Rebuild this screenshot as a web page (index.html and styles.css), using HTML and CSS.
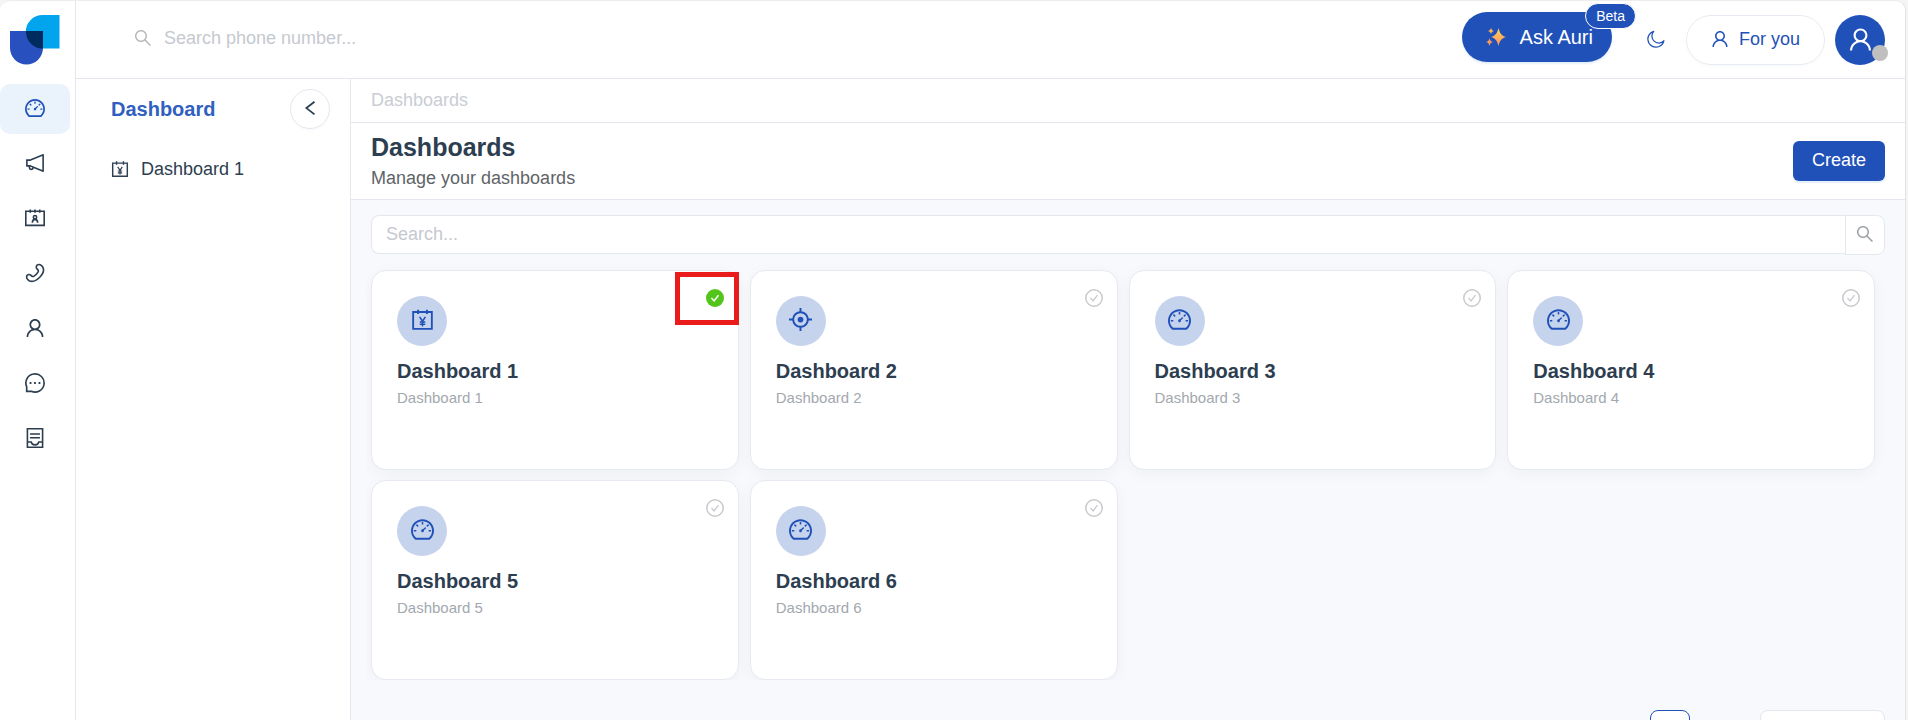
FILE: index.html
```html
<!DOCTYPE html>
<html lang="en">
<head>
  <meta charset="UTF-8" />
  <meta name="viewport" content="width=device-width, initial-scale=1.0" />
  <title>Dashboards</title>
  <link rel="stylesheet" href="styles.css">
</head>
<body>
  <!-- icon sprite -->
  <svg class="sprite" aria-hidden="true">
    <symbol id="i-gauge" viewBox="64 64 896 896"><path fill="currentColor" d="M924.8 385.6a446.7 446.7 0 00-96-142.4 446.7 446.7 0 00-142.4-96C631.1 123.8 572.5 112 512 112s-119.1 11.8-174.4 35.2a446.7 446.7 0 00-142.4 96 446.7 446.7 0 00-96 142.4C75.8 440.9 64 499.5 64 560c0 132.7 58.3 257.7 159.9 343.1l1.7 1.4c5.8 4.8 13.1 7.5 20.6 7.5h531.7c7.5 0 14.8-2.7 20.6-7.5l1.7-1.4C901.7 817.7 960 692.7 960 560c0-60.5-11.9-119.1-35.2-174.4zM761.4 836H262.6A371.12 371.12 0 01140 560c0-99.4 38.7-192.8 109-263 70.3-70.3 163.7-109 263-109 99.4 0 192.8 38.7 263 109 70.3 70.3 109 163.7 109 263 0 105.6-44.5 205.5-122.6 276zM623.5 421.5a8.03 8.03 0 00-11.3 0L527.7 506c-18.7-5-39.4-.2-54.1 14.5a55.95 55.95 0 000 79.2 55.95 55.95 0 0079.2 0 55.87 55.87 0 0014.5-54.1l84.5-84.5c3.1-3.1 3.1-8.2 0-11.3l-28.3-28.3zM490 320h44c4.4 0 8-3.6 8-8v-80c0-4.4-3.6-8-8-8h-44c-4.4 0-8 3.6-8 8v80c0 4.4 3.6 8 8 8zm260 218v44c0 4.4 3.6 8 8 8h80c4.4 0 8-3.6 8-8v-44c0-4.4-3.6-8-8-8h-80c-4.4 0-8 3.6-8 8zm12.7-197.2l-31.1-31.1a8.03 8.03 0 00-11.3 0l-56.6 56.6a8.03 8.03 0 000 11.3l31.1 31.1c3.1 3.1 8.2 3.1 11.3 0l56.6-56.6c3.1-3.1 3.1-8.2 0-11.3zm-458.6-31.1a8.03 8.03 0 00-11.3 0l-31.1 31.1a8.03 8.03 0 000 11.3l56.6 56.6c3.1 3.1 8.2 3.1 11.3 0l31.1-31.1c3.1-3.1 3.1-8.2 0-11.3l-56.6-56.6zM262 530h-80c-4.4 0-8 3.6-8 8v44c0 4.4 3.6 8 8 8h80c4.4 0 8-3.6 8-8v-44c0-4.4-3.6-8-8-8z"/></symbol>
    <symbol id="i-horn" viewBox="64 64 896 896"><path fill="currentColor" d="M880 112c-3.8 0-7.7.7-11.6 2.3L292 345.9H128c-8.8 0-16 7.4-16 16.6v299c0 9.2 7.2 16.6 16 16.6h101.7c-3.7 11.6-5.7 23.9-5.7 36.4 0 65.9 53.8 119.5 120 119.5 55.4 0 102.1-37.6 115.9-88.4l408.6 164.2c3.9 1.5 7.8 2.3 11.6 2.3 16.9 0 32-14.2 32-33.2V145.2C912 126.2 897 112 880 112zM344 762.3c-26.5 0-48-21.4-48-47.8 0-11.2 3.9-21.9 11-30.4l84.9 34.1c-2 24.6-22.7 44.1-47.9 44.1zm496 58.4L318.8 611.3l-12.9-5.2H184V417.9h121.9l12.9-5.2L840 203.3v617.4z"/></symbol>
    <symbol id="i-contacts" viewBox="64 64 896 896"><g fill="none" stroke="currentColor" stroke-width="72"><path d="M100 212h824v632H100zM300 128v150M512 128v150M724 128v150"/><circle cx="512" cy="476" r="74"/><path d="M392 724c4-86 48-150 120-150s116 64 120 150"/></g></symbol>
    <symbol id="i-phone" viewBox="0 0 20 20"><path fill="none" stroke="currentColor" stroke-width="1.600" stroke-linejoin="round" d="M12.100 2.100c2-1.400 4.300-.2 5.600 1.900 2 3.400-.3 7.600-3.200 10.500S7.600 19.300 4.100 17.700C1.900 16.500.9 14.200 2.200 12.300c1.100-1.200 2.800-1.100 3.700 0 .9 1.300 2 1.500 3.200.8 1.500-.9 3-2.400 3.900-3.900.7-1.200.4-2.300-.8-3.200-1.200-.9-1.300-2.700-.1-3.900z"/></symbol>
    <symbol id="i-user" viewBox="64 64 896 896"><path fill="currentColor" d="M858.5 763.6a374 374 0 00-80.6-119.5 375.63 375.63 0 00-119.5-80.6c-.4-.2-.8-.3-1.2-.5C719.5 518 760 444.7 760 362c0-137-111-248-248-248S264 225 264 362c0 82.7 40.5 156 102.8 201.1-.4.2-.8.3-1.2.5-44.8 18.9-85 46-119.5 80.6a375.63 375.63 0 00-80.6 119.5A371.7 371.7 0 00136 901.8a8 8 0 008 8.2h60c4.4 0 7.9-3.5 8-7.8 2-77.2 33-149.5 87.8-204.3 56.7-56.7 132-87.9 212.2-87.9s155.500 31.2 212.2 87.9C779 752.7 810 825 812 902.2c.1 4.4 3.6 7.8 8 7.8h60a8 8 0 008-8.2c-1-47.8-10.9-94.3-29.5-138.2zM512 534c-45.9 0-89.1-17.9-121.6-50.4S340 407.9 340 362c0-45.9 17.9-89.1 50.4-121.6S466.1 190 512 190s89.1 17.9 121.6 50.4S684 316.1 684 362c0 45.9-17.9 89.1-50.4 121.6S557.9 534 512 534z"/></symbol>
    <symbol id="i-message" viewBox="64 64 896 896"><path fill="none" stroke="currentColor" stroke-width="74" d="M140 884V680A408 408 0 1 1 345 884Z"/><path fill="currentColor" d="M272 472h80v80h-80zM472 472h80v80h-80zM672 472h80v80h-80z"/></symbol>
    <symbol id="i-inbox" viewBox="64 64 896 896"><g fill="none" stroke="currentColor" stroke-width="72"><path d="M172 100h680v824H172zM290 330h444M290 500h444M172 690h170c20 80 80 130 170 130s150-50 170-130h170"/></g></symbol>
    <symbol id="i-yen" viewBox="64 64 896 896"><g fill="none" stroke="currentColor" stroke-width="72"><path d="M148 220h728v656H148zM340 128v170M684 128v170"/><path stroke-width="60" d="M400 410l112 170 112-170M512 570v210M404 612h216M404 700h216"/></g></symbol>
    <symbol id="i-aim" viewBox="64 64 896 896"><g fill="none" stroke="currentColor" stroke-width="76"><circle cx="512" cy="512" r="286"/><path d="M512 64v180M512 780v180M64 512h180M780 512h180"/></g><circle cx="512" cy="512" r="112" fill="currentColor"/></symbol>
    <symbol id="i-search" viewBox="64 64 896 896"><path fill="currentColor" d="M909.6 854.5L649.9 594.8C690.2 542.7 712 479 712 412c0-80.2-31.3-155.4-87.9-212.1-56.6-56.7-132-87.9-212.1-87.9s-155.5 31.3-212.1 87.9C143.2 256.5 112 331.8 112 412c0 80.1 31.3 155.5 87.9 212.1C256.5 680.8 331.8 712 412 712c67 0 130.6-21.8 182.7-62l259.7 259.6a8.2 8.2 0 0011.6 0l43.6-43.5a8.2 8.2 0 000-11.6zM570.4 570.4C528 612.7 471.8 636 412 636s-116-23.3-158.4-65.6C211.3 528 188 471.8 188 412s23.3-116.1 65.6-158.4C296 211.3 352.2 188 412 188s116.1 23.2 158.4 65.6S636 352.2 636 412s-23.3 116.1-65.6 158.4z"/></symbol>
    <symbol id="i-left" viewBox="0 0 20 20"><path fill="none" stroke="currentColor" stroke-width="2" d="M15 2L6 9l9 7"/></symbol>
    <symbol id="i-moon" viewBox="0 0 20 20"><path fill="none" stroke="currentColor" stroke-width="1.400" stroke-linejoin="round" d="M7.500 1.500A9 9 0 1 0 18.800 12 7.200 7.200 0 0 1 7.500 1.500z"/></symbol>
    <symbol id="i-check" viewBox="64 64 896 896"><circle cx="512" cy="512" r="410" fill="none" stroke="currentColor" stroke-width="76"/><path fill="none" stroke="currentColor" stroke-width="66" d="M336 506l130 150 220-284"/></symbol>
    <symbol id="i-check-fill" viewBox="64 64 896 896"><circle cx="512" cy="512" r="448" fill="currentColor"/><path fill="none" stroke="#fff" stroke-width="76" d="M336 506l130 150 220-284"/></symbol>
  </svg>

  <div class="app">
    <nav class="rail">
      <a href="#" class="logo" aria-label="Home">
        <svg width="50" height="50" viewBox="10 15 50 50">
          <path fill="#00a5ee" d="M59.500 15H42.500a16.500 16.500 0 0 0 0 33.500h17z"/>
          <path fill="#2950bf" d="M10 31h33v17a16.500 16.500 0 0 1-33 0z"/>
          <path fill="#002b5f" d="M26 31h17v17.500h-.5A16.500 16.500 0 0 1 26 31z"/>
        </svg>
      </a>
      <a href="#" class="rail-item active" aria-label="Dashboards"><svg class="icon"><use href="#i-gauge"/></svg></a>
      <a href="#" class="rail-item" aria-label="Campaigns"><svg class="icon"><use href="#i-horn"/></svg></a>
      <a href="#" class="rail-item" aria-label="Contacts"><svg class="icon"><use href="#i-contacts"/></svg></a>
      <a href="#" class="rail-item" aria-label="Calls"><svg class="icon"><use href="#i-phone"/></svg></a>
      <a href="#" class="rail-item" aria-label="Users"><svg class="icon"><use href="#i-user"/></svg></a>
      <a href="#" class="rail-item" aria-label="Messages"><svg class="icon"><use href="#i-message"/></svg></a>
      <a href="#" class="rail-item" aria-label="Reports"><svg class="icon"><use href="#i-inbox"/></svg></a>
    </nav>

    <div class="shell">
      <header class="topbar">
        <label class="phone-search">
          <svg class="icon-sm"><use href="#i-search"/></svg>
          <input type="text" placeholder="Search phone number..." aria-label="Search phone number" />
        </label>
        <div class="actions">
          <button type="button" class="ask">
            <svg width="20" height="20" viewBox="0 0 20 20">
              <defs>
                <linearGradient id="spark" x1="0" y1="0" x2="0" y2="1">
                  <stop offset="0" stop-color="#ffd35c"/>
                  <stop offset="1" stop-color="#ff8f5e"/>
                </linearGradient>
              </defs>
              <path fill="url(#spark)" d="M12.500 1c1.200 5 2.700 7.500 7.500 9-4.800 1.500-6.300 4-7.500 9-1.200-5-2.700-7.500-7.500-9 4.800-1.500 6.300-4 7.500-9z"/>
              <path fill="#ffb45c" d="M5 .8c.5 2 1.200 2.700 3 3.200C6.200 4.500 5.500 5.200 5 7.200c-.5-2-1.200-2.700-3-3.200C3.800 3.500 4.500 2.800 5 .8z"/>
              <path fill="#ff9a5e" d="M3.500 11c.5 2.300 1.300 3.400 3.500 4-2.200.6-3 1.700-3.500 4-.5-2.300-1.300-3.400-3.500-4 2.200-.6 3-1.700 3.500-4z"/>
            </svg>
            Ask Auri
            <span class="beta">Beta</span>
          </button>
          <button type="button" class="theme" aria-label="Dark mode"><svg class="icon-sm"><use href="#i-moon"/></svg></button>
          <button type="button" class="for-you"><svg class="icon-sm"><use href="#i-user"/></svg>For you</button>
          <button type="button" class="avatar" aria-label="Account">
            <svg class="icon-lg"><use href="#i-user"/></svg>
            <span class="status"></span>
          </button>
        </div>
      </header>

      <div class="body">
        <aside class="sidebar">
          <div class="sidebar-head">
            <h2>Dashboard</h2>
            <button type="button" class="collapse" aria-label="Collapse"><svg class="icon-sm"><use href="#i-left"/></svg></button>
          </div>
          <a href="#" class="menu-item"><svg class="icon-sm"><use href="#i-yen"/></svg>Dashboard 1</a>
        </aside>

        <main>
          <div class="breadcrumb">Dashboards</div>
          <div class="page-head">
            <div>
              <h1>Dashboards</h1>
              <p>Manage your dashboards</p>
            </div>
            <button type="button" class="create">Create</button>
          </div>

          <div class="content">
            <form class="search">
              <input type="text" placeholder="Search..." aria-label="Search" />
              <button type="button" aria-label="Search"><svg class="icon-sm"><use href="#i-search"/></svg></button>
            </form>

            <div class="cards">
              <article class="card">
                <span class="card-icon"><svg class="icon-md"><use href="#i-yen"/></svg></span>
                <h3>Dashboard 1</h3>
                <p>Dashboard 1</p>
                <button type="button" class="pick picked" aria-label="Default dashboard"><svg class="icon-sm"><use href="#i-check-fill"/></svg></button>
                <span class="highlight"></span>
              </article>
              <article class="card">
                <span class="card-icon"><svg class="icon-md"><use href="#i-aim"/></svg></span>
                <h3>Dashboard 2</h3>
                <p>Dashboard 2</p>
                <button type="button" class="pick" aria-label="Set as default"><svg class="icon-sm"><use href="#i-check"/></svg></button>
              </article>
              <article class="card">
                <span class="card-icon"><svg class="icon-md"><use href="#i-gauge"/></svg></span>
                <h3>Dashboard 3</h3>
                <p>Dashboard 3</p>
                <button type="button" class="pick" aria-label="Set as default"><svg class="icon-sm"><use href="#i-check"/></svg></button>
              </article>
              <article class="card">
                <span class="card-icon"><svg class="icon-md"><use href="#i-gauge"/></svg></span>
                <h3>Dashboard 4</h3>
                <p>Dashboard 4</p>
                <button type="button" class="pick" aria-label="Set as default"><svg class="icon-sm"><use href="#i-check"/></svg></button>
              </article>
              <article class="card">
                <span class="card-icon"><svg class="icon-md"><use href="#i-gauge"/></svg></span>
                <h3>Dashboard 5</h3>
                <p>Dashboard 5</p>
                <button type="button" class="pick" aria-label="Set as default"><svg class="icon-sm"><use href="#i-check"/></svg></button>
              </article>
              <article class="card">
                <span class="card-icon"><svg class="icon-md"><use href="#i-gauge"/></svg></span>
                <h3>Dashboard 6</h3>
                <p>Dashboard 6</p>
                <button type="button" class="pick" aria-label="Set as default"><svg class="icon-sm"><use href="#i-check"/></svg></button>
              </article>
            </div>

            <div class="pagination">
              <button type="button" class="page-btn" aria-label="Page 1"></button>
              <select aria-label="Page size"></select>
            </div>
          </div>
        </main>
      </div>
    </div>
  </div>
</body>
</html>
```

FILE: styles.css
```css
* {
  box-sizing: border-box;
}
body {
  margin: 0;
  background-color: #f5f5f5;
  color: #2c3e50;
  font-family: 'Liberation Sans', Arial, sans-serif;
  font-size: 18px;
  line-height: 24px;
}
h1, h2, h3, p {
  margin: 0;
}
a {
  color: inherit;
  text-decoration: none;
}
button, input, select {
  font: inherit;
  color: inherit;
}
button {
  display: flex;
  align-items: center;
  justify-content: center;
  padding: 0;
  border: none;
  background: none;
  cursor: pointer;
}
input {
  outline: none;
}
input::placeholder {
  color: #c5c9cf;
  opacity: 1;
}
.sprite {
  display: none;
}
.icon {
  width: 20px;
  height: 20px;
}
.icon-sm {
  width: 18px;
  height: 18px;
  flex: none;
}
.icon-md {
  width: 23px;
  height: 23px;
}
.icon-lg {
  width: 25px;
  height: 25px;
}

.app {
  display: flex;
  height: 100vh;
  margin-right: 2px;
  overflow: hidden;
  background-color: #fff;
  border-top: 1px solid #ededed;
  border-right: 1px solid #e0e3e5;
  border-radius: 10px 10px 0 0;
}

/* left icon rail */
.rail {
  flex: none;
  display: flex;
  flex-direction: column;
  gap: 5px;
  width: 76px;
  padding-right: 5px;
  border-right: 1px solid #e4e7ee;
}
.logo {
  display: flex;
  padding: 14px 10px;
}
.rail-item {
  display: flex;
  align-items: center;
  justify-content: center;
  height: 50px;
  padding-bottom: 2px;
  border-radius: 10px;
}
.rail-item.active {
  background-color: #eaf2fb;
  color: #1f51b8;
}

.shell {
  flex: 1;
  display: flex;
  flex-direction: column;
  min-width: 0;
}
.topbar {
  flex: none;
  display: flex;
  align-items: center;
  justify-content: space-between;
  height: 78px;
  padding: 0 20px 0 58px;
  border-bottom: 1px solid #e4e7ee;
}
.phone-search {
  display: flex;
  align-items: center;
  gap: 12px;
  padding-bottom: 4px;
  color: #b5b8bc;
}
.phone-search input {
  width: 300px;
  padding: 0;
  border: none;
  background: none;
}
.actions {
  display: flex;
  align-items: center;
  gap: 10px;
}
.ask {
  position: relative;
  gap: 14px;
  height: 50px;
  margin: 0 14px 6px 0;
  padding: 0 19px 0 24px;
  border-radius: 25px;
  background-color: #1f51b8;
  box-shadow: 0 2px 2px #e6effa;
  color: #fff;
  font-size: 20px;
}
.beta {
  position: absolute;
  top: -9px;
  right: -24px;
  padding: 0 10px;
  border: 1px solid #fff;
  border-radius: 13px;
  background-color: #1f51b8;
  font-size: 14px;
}
.theme {
  width: 40px;
  height: 40px;
  padding-bottom: 2px;
  color: #1f51b8;
}
.for-you {
  gap: 10px;
  height: 50px;
  padding: 0 24px 2px;
  border: 1px solid #e8eaf1;
  border-radius: 25px;
  box-shadow: 0 2px 2px #fafbfc;
  color: #1f51b8;
}
.avatar {
  position: relative;
  width: 50px;
  height: 50px;
  border-radius: 50%;
  background-color: #1f51b8;
  color: #fff;
}
.status {
  position: absolute;
  right: -3px;
  bottom: 4px;
  width: 16px;
  height: 16px;
  border-radius: 50%;
  background-color: #bfbfbf;
}

.body {
  flex: 1;
  display: flex;
  min-height: 0;
}
.sidebar {
  flex: none;
  width: 275px;
  padding: 10px 20px 0 35px;
  border-right: 1px solid #e4e7ee;
}
.sidebar-head {
  display: flex;
  align-items: center;
  justify-content: space-between;
}
.sidebar h2 {
  font-size: 20px;
  color: #305fc0;
}
.collapse {
  width: 40px;
  height: 40px;
  border: 1px solid #e4e7ee;
  border-radius: 50%;
  box-shadow: 0 2px 2px #fafbfc;
}
.menu-item {
  display: flex;
  align-items: center;
  gap: 12px;
  height: 50px;
  margin-top: 15px;
}

main {
  flex: 1;
  display: flex;
  flex-direction: column;
  min-width: 0;
}
.breadcrumb {
  flex: none;
  padding: 9px 20px 10px;
  border-bottom: 1px solid #e4e7ee;
  color: #c9cdd3;
}
.page-head {
  flex: none;
  display: flex;
  align-items: center;
  justify-content: space-between;
  padding: 9px 20px;
  border-bottom: 1px solid #e4e7ee;
}
.page-head h1 {
  margin-bottom: 4px;
  font-size: 25px;
  line-height: 30px;
}
.page-head p {
  color: #606468;
}
.create {
  height: 40px;
  padding: 0 19px 2px;
  border-radius: 6px;
  background-color: #1f51b8;
  box-shadow: 0 2px 1px #e6effa;
  color: #fff;
}

.content {
  flex: 1;
  min-height: 0;
  overflow: hidden;
  padding: 15px 20px;
  background-color: #f7f9fd;
}
.search {
  display: flex;
  align-items: flex-start;
}
.search input {
  flex: 1;
  height: 39px;
  padding: 0 14px;
  border: 1px solid #e4e7ee;
  border-right: none;
  border-radius: 8px 0 0 8px;
  background-color: #fff;
}
.search button {
  width: 40px;
  height: 40px;
  padding-bottom: 2px;
  border: 1px solid #e4e7ee;
  border-radius: 0 8px 8px 0;
  background-color: #fff;
  color: #9ba1a9;
}

.cards {
  display: grid;
  grid-template-columns: repeat(4, 1fr);
  gap: 10px 11px;
  margin-left: -5px;
  padding: 15px 10px 0 5px;
  overflow: hidden;
}
.card {
  position: relative;
  height: 200px;
  padding: 25px;
  border: 1px solid #e6e9ef;
  border-radius: 15px;
  background-color: #fff;
  box-shadow: 0 4px 16px rgba(0, 0, 0, 0.04);
}
.card-icon {
  display: flex;
  align-items: center;
  justify-content: center;
  width: 50px;
  height: 50px;
  margin-bottom: 10px;
  padding-bottom: 3px;
  border-radius: 50%;
  background-color: #c6d3ed;
  color: #1f51b8;
}
.card h3 {
  font-size: 20px;
  line-height: 30px;
}
.card p {
  font-size: 15px;
  color: #a3a8ae;
}
.pick {
  position: absolute;
  top: 18px;
  right: 14px;
  color: #c8cace;
}
.pick.picked {
  color: #52c41a;
}
/* red frame that points at the default mark */
.highlight {
  position: absolute;
  top: 1px;
  right: -1px;
  width: 64px;
  height: 53px;
  border: 5px solid #ea1b1b;
  pointer-events: none;
}

.pagination {
  display: flex;
  justify-content: flex-end;
  gap: 70px;
  margin-top: 30px;
}
.page-btn {
  width: 40px;
  height: 40px;
  border: 1px solid #1f51b8;
  border-radius: 8px;
  background-color: #fff;
}
.pagination select {
  width: 125px;
  height: 40px;
  border: 1px solid #e4e7ee;
  border-radius: 8px;
  background-color: #fff;
  appearance: none;
}
```
